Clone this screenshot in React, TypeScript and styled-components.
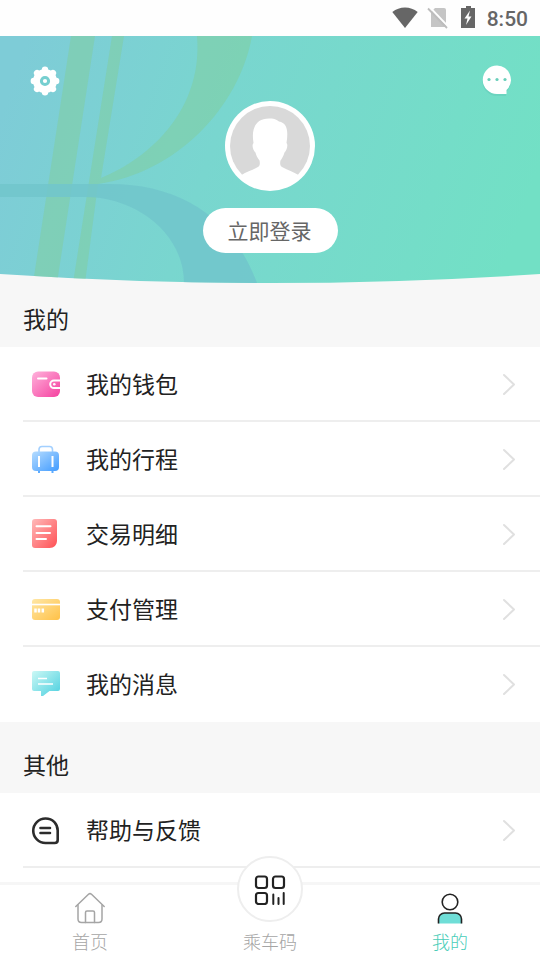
import React from "react";
import styled, { createGlobalStyle } from "styled-components";

const GlobalStyle = createGlobalStyle`
  *, *::before, *::after { box-sizing: border-box; }
  body {
    margin: 0;
    background: #f7f7f7;
    color: #222;
    font-family: "Noto Sans CJK SC", sans-serif;
  }
  button { font: inherit; color: inherit; border: 0; padding: 0; background: none; cursor: pointer; }
  a { color: inherit; text-decoration: none; }
  svg { display: block; flex: none; }
`;

const Screen = styled.div`
  height: 100vh;
  display: flex;
  flex-direction: column;
  overflow: hidden;
`;

const StatusBar = styled.div`
  flex: none;
  height: 36px;
  padding: 0 12px;
  display: flex;
  align-items: center;
  justify-content: flex-end;
  background: #fefefe;
  color: #666;
`;

const StatusIcons = styled.div`
  display: flex;
  align-items: center;
  gap: 8px;
  height: 34px;
  align-self: flex-start;
  margin-right: 6px;
`;

const Clock = styled.time`
  font-family: Roboto, sans-serif;
  font-size: 21px;
  line-height: 36px;
  padding-top: 2px;
  font-weight: 500;
`;

const Content = styled.main`
  flex: 1;
  min-height: 0;
  overflow: hidden;
`;

const Hero = styled.header`
  position: relative;
  display: grid;
  grid-template-columns: 1fr auto 1fr;
  align-items: start;
  padding: 24px 22px 30px;
`;

const HeroBackdrop = styled.svg`
  position: absolute;
  inset: 0;
  width: 100%;
  height: 100%;
`;

const IconButton = styled.button<{ $end?: boolean }>`
  position: relative;
  justify-self: ${(p) => (p.$end ? "end" : "start")};
  width: ${(p) => (p.$end ? "42px" : "46px")};
  height: ${(p) => (p.$end ? "40px" : "42px")};
  display: grid;
  place-items: center;
`;

const Profile = styled.div`
  position: relative;
  display: flex;
  flex-direction: column;
  align-items: center;
  gap: 17px;
  padding-top: 41px;
`;

const LoginButton = styled.button`
  height: 45px;
  padding: 0 26px 0 25px;
  border-radius: 23px;
  background: #fff;
  color: #666;
  font-size: 21px;
  line-height: 45px;
`;

const SectionTitle = styled.h2<{ $first?: boolean }>`
  margin: 0;
  padding: ${(p) => (p.$first ? "19px" : "26px")} 23px 13px;
  font-size: 23px;
  line-height: 32px;
  font-weight: 400;
`;

const Menu = styled.nav`
  background: #fff;
  padding-left: 23px;
`;

const MenuRow = styled.a<{ $divider: boolean }>`
  display: flex;
  align-items: center;
  height: 75px;
  padding: 0 23px 0 7px;
  border-bottom: 2px solid ${(p) => (p.$divider ? "#eee" : "transparent")};
`;

const MenuLabel = styled.span`
  flex: 1;
  margin-left: 24px;
  padding-bottom: 2px;
  font-size: 23px;
  line-height: 32px;
`;

const TabBar = styled.nav`
  position: relative;
  flex: none;
  display: grid;
  grid-template-columns: repeat(3, 1fr);
  height: 78px;
  padding-bottom: 7px;
  background: #fff;
  border-top: 3px solid #f6f6f6;
`;

const Tab = styled.a<{ $active?: boolean }>`
  display: flex;
  flex-direction: column;
  align-items: center;
  justify-content: flex-end;
  min-height: 0;
  gap: 5px;
  font-size: 18px;
  line-height: 24px;
  font-weight: 300;
  color: ${(p) => (p.$active ? "#4acdb8" : "#a5a5a5")};
`;

const CodeBadge = styled.span`
  flex: none;
  width: 66px;
  height: 66px;
  margin-bottom: 2px;
  display: grid;
  place-items: center;
  border: 2px solid #eee;
  border-radius: 50%;
  background: #fff;
`;

const Gradient = ({ id, from, to }: { id: string; from: string; to: string }) => (
  <linearGradient id={id} x1="0" y1="0" x2="1" y2="1">
    <stop offset="0" stopColor={from} />
    <stop offset="1" stopColor={to} />
  </linearGradient>
);

const WalletIcon = () => (
  <svg width="32" height="32" viewBox="0 0 32 32">
    <defs><Gradient id="wallet" from="#ffb3dc" to="#f5409f" /></defs>
    <rect x="2" y="3.500" width="28" height="25.500" rx="6" fill="url(#wallet)" />
    <path d="M8 10.500h8.500" stroke="#fff" strokeWidth="2" strokeLinecap="round" />
    <path d="M30 12.500H24a3.800 3.800 0 0 0 0 7.600H30" fill="none" stroke="#fff" strokeWidth="2" />
    <circle cx="24.300" cy="16.300" r="1.300" fill="#fff" />
  </svg>
);

const LuggageIcon = () => (
  <svg width="32" height="32" viewBox="0 0 32 32">
    <defs><Gradient id="luggage" from="#b5dcff" to="#419bff" /></defs>
    <path d="M9 10V6.500a3 3 0 0 1 3-3h7.500a3 3 0 0 1 3 3V10" fill="none" stroke="#a3d0ff" strokeWidth="1.600" />
    <rect x="2" y="8.500" width="27" height="19.500" rx="4" fill="url(#luggage)" />
    <path d="M9 13v11M22.500 13v11" stroke="#fff" strokeWidth="2" />
    <path d="M9 28v2M22.500 28v2" stroke="#5eacff" strokeWidth="2" />
  </svg>
);

const ReceiptIcon = () => (
  <svg width="32" height="32" viewBox="0 0 32 32">
    <defs><Gradient id="receipt" from="#ffb9b9" to="#ff5054" /></defs>
    <path d="M5 1h19a3 3 0 0 1 3 3V22.500c0 4.500-3 7.500-7.500 7.500H5a3 3 0 0 1-3-3v-23a3 3 0 0 1 3-3Z" fill="url(#receipt)" />
    <path d="M6.500 8.200h14M6.500 15H20M6.500 21H16" stroke="#fff" strokeWidth="2" strokeLinecap="round" />
  </svg>
);

const CardIcon = () => (
  <svg width="32" height="32" viewBox="0 0 32 32">
    <defs><Gradient id="card" from="#ffe7a6" to="#ffc147" /></defs>
    <rect x="2" y="6" width="28" height="21" rx="3" fill="url(#card)" />
    <path d="M2 11.500h28" stroke="#fff" strokeWidth="1.600" />
    <path d="M5.500 15.500v4M9 15.500v4M12.800 15.500v4" stroke="#fff" strokeWidth="2.500" />
  </svg>
);

const MessageIcon = () => (
  <svg width="32" height="32" viewBox="0 0 32 32">
    <defs><Gradient id="message" from="#cbf8f5" to="#4bcfdf" /></defs>
    <path d="M4 3h24a2 2 0 0 1 2 2v16a2 2 0 0 1-2 2h-8.500L13 28h-2v-5H4a2 2 0 0 1-2-2V5a2 2 0 0 1 2-2Z" fill="url(#message)" />
    <path d="M8 10.500h9M8 16h15" stroke="#fff" strokeWidth="1.500" />
  </svg>
);

const HelpIcon = () => (
  <svg width="32" height="32" viewBox="0 0 32 32" fill="none" stroke="#2c2c2c" strokeLinecap="round">
    <path d="M15.500 4.500c7.500 0 12.200 5.500 12.200 12V26c0 2-1 3-3 3H15.500A12.250 12.250 0 0 1 15.500 4.500Z" strokeWidth="2.600" />
    <path d="M10.500 14h9.500M10.500 19h9.500" strokeWidth="2.600" />
  </svg>
);

const Chevron = () => (
  <svg width="16" height="22" viewBox="0 0 16 22" fill="none" stroke="#e0e0e0" strokeWidth="2" strokeLinecap="round" strokeLinejoin="round">
    <path d="M3 2l10 9.500L3 21" />
  </svg>
);

const GearIcon = () => (
  <svg width="30" height="30" viewBox="-15 -15 30 30">
    <g fill="#fff">
      <circle r="12" />
      {[0, 45, 90, 135, 180, 225, 270, 315].map((a) => (
        <circle key={a} cy="-11.200" r="3.200" transform={`rotate(${a})`} />
      ))}
    </g>
    <circle r="3.600" fill="#fff" stroke="#76cfd0" strokeWidth="3" />
  </svg>
);

const ChatIcon = () => (
  <svg width="36" height="36" viewBox="0 0 36 36">
    <path d="M18 5a14.200 14.200 0 1 0 0 29h9v-4a14.200 14.200 0 0 0-9-25Z" fill="#4eb9a6" opacity=".25" />
    <path d="M18 3.500a14.250 14.250 0 0 0 0 28.500h9.500v-4A14.250 14.250 0 0 0 18 3.500Z" fill="#fff" />
    <g fill="#69cfba"><circle cx="10" cy="17.500" r="1.600" /><circle cx="18" cy="17.500" r="1.600" /><circle cx="26" cy="17.500" r="1.600" /></g>
  </svg>
);

const Avatar = () => (
  <svg width="90" height="90" viewBox="0 0 90 90" role="img" aria-label="头像">
    <circle cx="45" cy="45" r="45" fill="#fff" />
    <circle cx="45" cy="45" r="40" fill="#d9d9d9" />
    <path
      d="M16.500 74 C21 71 28 69 32 66.500C35.500 65 35 62 34.500 59.500C32 56 31 54 30.500 51.500C28 49.500 26.500 44 28.500 42C26 27 31 17.500 44 17.500C48 17.500 51 18 54 20.500C62 22 63.500 29 61.500 42C63.500 44 61.500 50 59.500 51.500C58.500 55 57 57.500 55.500 59.500C55 62 54.500 65 58 66.500C62 69 69 71 73.500 74C60 92 30 92 16.500 74Z"
      fill="#fff"
    />
  </svg>
);

const WifiIcon = () => (
  <svg width="28" height="24" viewBox="0 0 28 24" fill="#666">
    <path d="M14 23 1.300 7A20 20 0 0 1 26.700 7Z" />
  </svg>
);

const NoSimIcon = () => (
  <svg width="22" height="24" viewBox="0 0 22 24">
    <path d="M8 3h9a2 2 0 0 1 2 2v17H4V7Z" fill="#c5c5c5" />
    <path d="M2.500 2 22 22.500" stroke="#fefefe" strokeWidth="2" />
    <path d="M1 3.500 20 23" stroke="#bdbdbd" strokeWidth="1.800" />
  </svg>
);

const BatteryIcon = () => (
  <svg width="24" height="24" viewBox="0 0 24 24">
    <path d="M9 1h5v2h4v20h-14V3H9Z" fill="#666" />
    <path d="M13 5.500 7.500 13.500h3L9 20 14.500 11.500h-3Z" fill="#fefefe" />
  </svg>
);

const HomeIcon = () => (
  <svg width="32" height="32" viewBox="0 0 32 32" fill="none" stroke="#a5a5a5" strokeWidth="1.500" strokeLinecap="round" strokeLinejoin="round">
    <path d="M1.800 14.500 14.500 2.300q1.500-1.300 3 0L30.200 14.500" />
    <path d="M4 13v14q0 3.500 3.500 3.500h17q3.500 0 3.500-3.500V13" />
    <path d="M11.500 30.500V20.500q0-1.500 1.500-1.500h6q1.500 0 1.500 1.500v10" />
  </svg>
);

const RideCodeIcon = () => (
  <svg width="32" height="32" viewBox="0 0 32 32" fill="none" stroke="#222" strokeWidth="2.200" strokeLinecap="round">
    <rect x="2" y="3.500" width="11" height="11.500" rx="2.500" />
    <rect x="19" y="3.500" width="11" height="11.500" rx="2.500" />
    <rect x="2" y="20" width="11" height="11" rx="2.500" />
    <path d="M19.300 21.500v9.500M24.500 25v6M29.700 20v11" strokeWidth="2" />
  </svg>
);

const PersonIcon = () => (
  <svg width="32" height="32" viewBox="0 0 32 32" fill="none" stroke="#222" strokeWidth="1.600">
    <circle cx="16" cy="10" r="7.800" />
    <path d="M4.500 31.500V27a6 6 0 0 1 6-6h11a6 6 0 0 1 6 6v4.500" fill="#6fded7" />
  </svg>
);

const Backdrop = () => (
  <HeroBackdrop viewBox="0 0 540 247" preserveAspectRatio="none" aria-hidden="true">
    <defs>
      <linearGradient id="sky" gradientUnits="userSpaceOnUse" x1="20" y1="20" x2="520" y2="190">
        <stop offset="0" stopColor="#7eccd7" />
        <stop offset=".4" stopColor="#79d6cf" />
        <stop offset="1" stopColor="#72e0c5" />
      </linearGradient>
      <clipPath id="curve"><path d="M0 0H540V238Q270 256 0 238Z" /></clipPath>
    </defs>
    <g clipPath="url(#curve)">
      <path d="M0 0H540V247H0Z" fill="url(#sky)" />
      <g fill="#82cd9b" fillOpacity=".5">
        <path d="M71 0H95L57 247H33Z" />
        <path d="M112 0H124L101 142C152 121 203 72 197 0H252C239 72 176 137 98 148L85 247H73Z" />
      </g>
      <path d="M0 148H110C180 148 233 182 257 247H184C184 198 137 161 85 161H0Z" fill="#71c5cb" fillOpacity=".85" />
    </g>
  </HeroBackdrop>
);

const mine = [
  { label: "我的钱包", Icon: WalletIcon },
  { label: "我的行程", Icon: LuggageIcon },
  { label: "交易明细", Icon: ReceiptIcon },
  { label: "支付管理", Icon: CardIcon },
  { label: "我的消息", Icon: MessageIcon },
];

export default function App() {
  return (
    <Screen>
      <GlobalStyle />
      <StatusBar>
        <StatusIcons><WifiIcon /><NoSimIcon /><BatteryIcon /></StatusIcons>
        <Clock>8:50</Clock>
      </StatusBar>
      <Content>
        <Hero>
          <Backdrop />
          <IconButton aria-label="设置"><GearIcon /></IconButton>
          <Profile>
            <Avatar />
            <LoginButton>立即登录</LoginButton>
          </Profile>
          <IconButton $end aria-label="消息"><ChatIcon /></IconButton>
        </Hero>
        <SectionTitle $first>我的</SectionTitle>
        <Menu aria-label="我的">
          {mine.map(({ label, Icon }, i) => (
            <MenuRow key={label} href="#" $divider={i < mine.length - 1}>
              <Icon /><MenuLabel>{label}</MenuLabel><Chevron />
            </MenuRow>
          ))}
        </Menu>
        <SectionTitle>其他</SectionTitle>
        <Menu aria-label="其他">
          <MenuRow href="#" $divider>
            <HelpIcon /><MenuLabel>帮助与反馈</MenuLabel><Chevron />
          </MenuRow>
          <MenuRow as="div" $divider={false} />
        </Menu>
      </Content>
      <TabBar>
        <Tab href="#"><HomeIcon />首页</Tab>
        <Tab href="#"><CodeBadge><RideCodeIcon /></CodeBadge>乘车码</Tab>
        <Tab href="#" $active aria-current="page"><PersonIcon />我的</Tab>
      </TabBar>
    </Screen>
  );
}
